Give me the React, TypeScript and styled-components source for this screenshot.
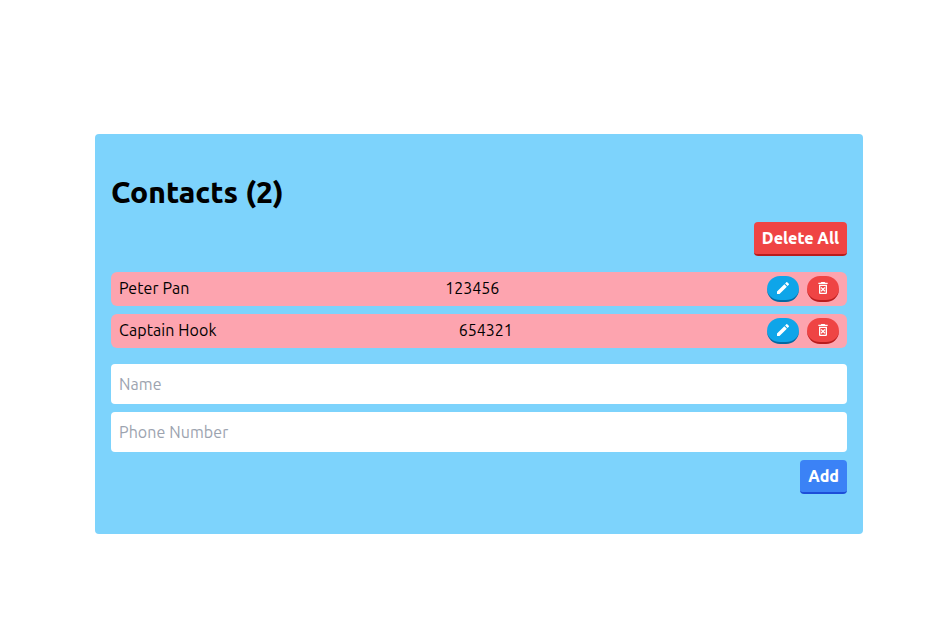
import React from "react";
import styled, { createGlobalStyle } from "styled-components";
import { MdEdit, MdOutlineDeleteForever } from "react-icons/md";

const GlobalStyle = createGlobalStyle`
  *, *::before, *::after { box-sizing: border-box; }
  body {
    margin: 0;
    background: #fff;
    color: #000;
    font-family: Ubuntu, "Noto Sans", sans-serif;
    font-size: 16px;
    line-height: 24px;
  }
`;

const Panel = styled.main`
  width: 768px;
  height: 400px;
  margin: 134px 0 0 95px;
  padding: 40px 16px;
  border-radius: 4px;
  background: #7dd3fc;
  display: flex;
  flex-direction: column;
`;

const Title = styled.h1`
  margin: 0 0 12px;
  font-size: 30px;
  line-height: 36px;
  font-weight: 800;
`;

const Actions = styled.div`
  display: flex;
  justify-content: flex-end;
`;

const Button = styled.button<{ $bg: string; $edge: string }>`
  height: 34px;
  padding: 4px 8px;
  border: 0;
  border-bottom: 2px solid ${(p) => p.$edge};
  border-radius: 4px;
  background: ${(p) => p.$bg};
  color: #fff;
  font: inherit;
  font-weight: 800;
`;

const List = styled.ul`
  list-style: none;
  margin: 16px 0;
  padding: 0;
  display: grid;
  gap: 8px;
`;

const Row = styled.li`
  height: 34px;
  padding: 0 8px;
  border-radius: 6px;
  background: #fda4af;
  display: flex;
  justify-content: space-between;
  align-items: center;
`;

const Phone = styled.span`
  padding-bottom: 2px;
`;

const Name = styled(Phone)`
  letter-spacing: 0.09px;
`;

const Tools = styled.div`
  display: flex;
  gap: 8px;
  padding-left: 12px;
`;

const RoundButton = styled.button<{ $bg: string; $edge: string }>`
  width: 32px;
  height: 26px;
  padding: 0;
  border: 0;
  border-bottom: 2px solid ${(p) => p.$edge};
  border-radius: 9999px;
  background: ${(p) => p.$bg};
  color: #fff;
  display: grid;
  place-items: center;
`;

const Form = styled.form`
  display: grid;
  gap: 8px;
`;

const Input = styled.input`
  height: 40px;
  width: 100%;
  padding: 8px;
  border: 0;
  border-radius: 4px;
  font: inherit;
  letter-spacing: 0.08px;
  &::placeholder { color: #9ca3af; opacity: 1; }
`;

const contacts = [
  { name: "Peter Pan", phone: "123456" },
  { name: "Captain Hook", phone: "654321" },
];

export default function App() {
  return (
    <>
      <GlobalStyle />
      <Panel>
        <Title>Contacts ({contacts.length})</Title>
        <Actions>
          <Button $bg="#ef4444" $edge="#b91c1c">Delete All</Button>
        </Actions>
        <List>
          {contacts.map((c) => (
            <Row key={c.name}>
              <Name>{c.name}</Name>
              <Phone>{c.phone}</Phone>
              <Tools>
                <RoundButton aria-label="Edit" $bg="#0ea5e9" $edge="#0369a1"><MdEdit size={16} /></RoundButton>
                <RoundButton aria-label="Delete" $bg="#ef4444" $edge="#b91c1c"><MdOutlineDeleteForever size={16} /></RoundButton>
              </Tools>
            </Row>
          ))}
        </List>
        <Form>
          <Input placeholder="Name" />
          <Input placeholder="Phone Number" />
          <Actions>
            <Button type="button" $bg="#3b82f6" $edge="#1d4ed8">Add</Button>
          </Actions>
        </Form>
      </Panel>
    </>
  );
}
